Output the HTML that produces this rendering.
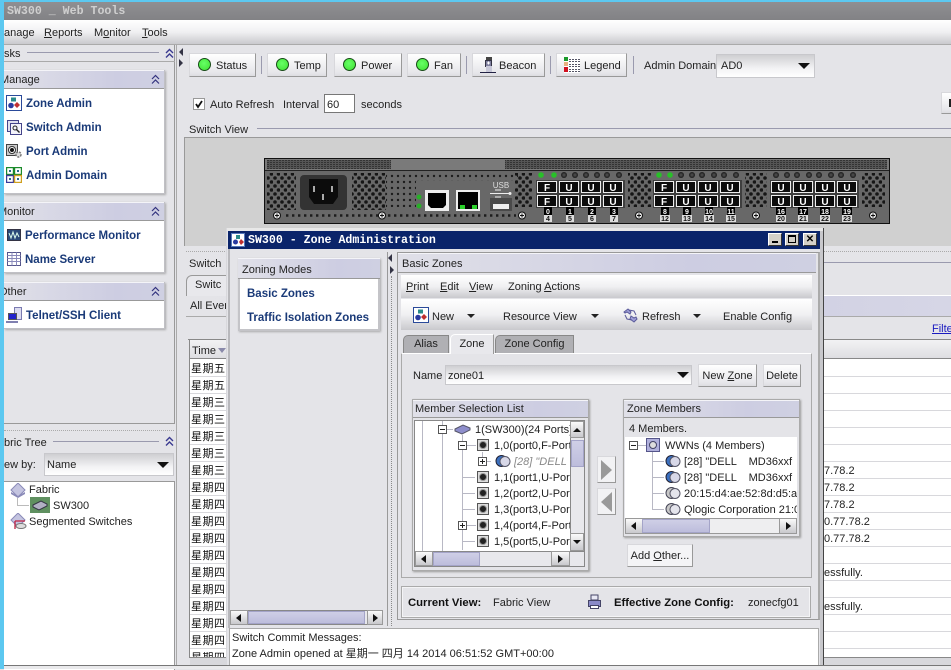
<!DOCTYPE html>
<html><head><meta charset="utf-8"><style>
html,body{margin:0;padding:0;background:#e4e4e8}
body{position:relative;width:951px;height:669px;overflow:hidden;font:11px/14px "Liberation Sans",sans-serif;color:#222}
.a,.t{position:absolute}
.t{white-space:nowrap;margin-top:1px}
.b{font-weight:bold;color:#1a3a78;font-size:11.5px}
.hd{position:absolute;background:linear-gradient(90deg,#e0e0e8,#cdcde2 70%,#cfd0e2);border-bottom:1px solid #999;box-shadow:inset 0 1px 0 #f4f4f8}
.pn{position:absolute;background:#fff;box-shadow:1px 1px 2px #aaa;border:1px solid #c0c0c5;box-sizing:border-box}
.btn{position:absolute;box-sizing:border-box;background:linear-gradient(#fff,#e6e6ea 85%,#dcdce0);border:1px solid #d8d8dc;border-right:1px solid #999;border-bottom:1px solid #999;text-align:center}
.sep{position:absolute;width:1px;height:18px;top:56px;background:#9a9aae}
.led{position:absolute;width:11px;height:11px;border-radius:50%;background:radial-gradient(circle at 45% 40%,#6f6,#3ee030);border:1.5px solid #174a17;top:58px}
.tb{background:linear-gradient(#fff,#f0f0f2 50%,#c9c9cd);position:absolute}
.cb{position:absolute;box-sizing:border-box;background:linear-gradient(#cfcfd2,#f2f2f4 60%,#fff);border:1px solid #c8c8cc}
.ar{position:absolute;width:0;height:0;border-left:6px solid transparent;border-right:6px solid transparent;border-top:6px solid #111}
.ars{position:absolute;width:0;height:0;border-left:4px solid transparent;border-right:4px solid transparent;border-top:4px solid #222}
.cj{font:11px/14px "WenQuanYi Zen Hei","Noto Sans CJK SC",sans-serif;letter-spacing:.5px;color:#111;margin-top:0}
.l{position:absolute;height:1px;background:#d8d8dc;left:190px;width:761px}
.s{position:absolute;background:linear-gradient(#cfcfe6,#bdbddc);border:1px solid #a4a4c8;box-sizing:border-box}
.sb{position:absolute;background:linear-gradient(#fafafa,#c8c8cc);border:1px solid #999;box-sizing:border-box}
.tab{position:absolute;box-sizing:border-box;background:#b0b0b4;border:1px solid #888;border-bottom:0;text-align:center;line-height:17px;border-radius:5px 0 0 0}
.port{position:absolute;width:12px;height:12px;box-sizing:border-box;background:#ddd;border:1px solid #555}
.port i{position:absolute;left:1px;top:1px;width:8px;height:8px;border-radius:50%;background:#222;border:1px solid #999;box-sizing:border-box}
.g{position:absolute;background:#b8b8c4}
.box{position:absolute;width:9px;height:9px;box-sizing:border-box;border:1px solid #555;background:#fff}
.box:before{content:"";position:absolute;left:1px;top:3px;width:5px;height:1px;background:#222}
.plus:after{content:"";position:absolute;left:3px;top:1px;width:1px;height:5px;background:#222}
.wb{position:absolute;top:233px;height:13px;width:14px;box-sizing:border-box;background:#d4d0c8;border:1px solid;border-color:#fff #333 #333 #fff;font:bold 10px/11px "Liberation Sans",sans-serif;text-align:center;color:#000}
</style></head><body>

<!-- screen edge -->
<div class="a" style="left:0;top:0;width:951px;height:2px;background:#5cc8f0"></div>
<div class="a" style="left:0;top:0;width:4px;height:669px;background:#5cc8f0;z-index:9"></div>

<!-- title bar -->
<div class="a" style="left:4px;top:2px;width:947px;height:18px;background:linear-gradient(#8f8f92,#828285)"></div>
<div class="t" style="left:7px;top:4px;font:bold 11.6px/14px 'Liberation Mono',monospace;color:#cfcfcf">SW300 _ Web Tools</div>

<!-- menu -->
<div class="tb" style="left:4px;top:20px;width:947px;height:24px;border-bottom:1px solid #aaa"></div>
<div class="t" style="left:4px;top:25px">anage</div>
<div class="t" style="left:44px;top:25px"><u>R</u>eports</div>
<div class="t" style="left:94px;top:25px">M<u>o</u>nitor</div>
<div class="t" style="left:142px;top:25px"><u>T</u>ools</div>

<!-- LEFT TASK COLUMN -->
<div class="a" style="left:174px;top:45px;width:1px;height:379px;background:#999"></div>
<div class="a" style="left:4px;top:423px;width:171px;height:1px;background:#999"></div>
<div class="a" style="left:4px;top:61px;width:171px;height:1px;background:#aaa"></div>
<div class="t" style="left:4px;top:46px">sks</div>
<div class="a" style="left:27px;top:52px;width:132px;height:1px;background:#9a9aae"></div>
<svg class="a" style="left:164px;top:48px" width="11" height="11" viewBox="0 0 11 11"><path d="M2 5l3.500-3.500L9 5M2 9.500l3.500-3.500L9 9.500" fill="none" stroke="#3a3a90" stroke-width="1.400"/></svg>

<!-- Manage -->
<div class="pn" style="left:4px;top:70px;width:161px;height:124px;border-left:0"></div>
<div class="hd" style="left:4px;top:70px;width:160px;height:18px"></div>
<div class="t" style="left:0;top:72px">Manage</div>
<svg class="a" style="left:150px;top:74px" width="11" height="11" viewBox="0 0 11 11"><path d="M2 5l3.500-3.500L9 5M2 9.500l3.500-3.500L9 9.500" fill="none" stroke="#33337f" stroke-width="1.200"/></svg>
<svg class="a" style="left:6px;top:95px" width="16" height="16"><rect x=".5" y=".5" width="15" height="15" fill="#fff" stroke="#2a4a9a"/><rect x="5" y="2.500" width="5" height="4" fill="#2a8a8a"/><circle cx="5" cy="10.500" r="2.800" fill="#2a3aa0"/><path d="M11 7l3 3-3 3-3-3z" fill="#c03030"/></svg>
<div class="t b" style="left:26px;top:96px">Zone Admin</div>
<svg class="a" style="left:7px;top:120px" width="15" height="15"><rect x=".5" y=".5" width="11" height="11" fill="#e0e0ee" stroke="#44448a"/><rect x="3.500" y="3.500" width="11" height="11" fill="#f4f4fa" stroke="#44448a"/><circle cx="8" cy="8" r="2" fill="none" stroke="#222"/><path d="M9.500 9.500l3 3" stroke="#222" stroke-width="1.400"/></svg>
<div class="t b" style="left:26px;top:120px">Switch Admin</div>
<svg class="a" style="left:6px;top:144px" width="17" height="15"><rect x=".5" y=".5" width="11" height="11" fill="#ccc" stroke="#444"/><circle cx="6" cy="6" r="3.500" fill="#fff" stroke="#333"/><circle cx="6" cy="6" r="2" fill="#111"/><circle cx="12.500" cy="10.500" r="2.500" fill="#ddd" stroke="#777" stroke-width="1.500" stroke-dasharray="2 1"/></svg>
<div class="t b" style="left:26px;top:144px">Port Admin</div>
<svg class="a" style="left:6px;top:167px" width="16" height="16"><rect x=".5" y=".5" width="7" height="7" fill="#fff" stroke="#1a8a2a" stroke-width="1.400"/><rect x="8.500" y=".5" width="7" height="7" fill="#fff" stroke="#1a8a2a" stroke-width="1.400"/><rect x=".5" y="8.500" width="7" height="7" fill="#fff" stroke="#3a3a9a" stroke-width="1.400"/><rect x="8.500" y="8.500" width="7" height="7" fill="#fff" stroke="#d0a020" stroke-width="1.400"/><rect x="3" y="3" width="2" height="2" fill="#2a6a8a"/><rect x="11" y="3" width="2" height="2" fill="#2a6a8a"/><rect x="3" y="11" width="2" height="2" fill="#2a6a8a"/><rect x="11" y="11" width="2" height="2" fill="#2a6a8a"/></svg>
<div class="t b" style="left:26px;top:168px">Admin Domain</div>

<!-- Monitor -->
<div class="pn" style="left:4px;top:202px;width:161px;height:71px;border-left:0"></div>
<div class="hd" style="left:4px;top:202px;width:160px;height:18px"></div>
<div class="t" style="left:-2px;top:204px">Monitor</div>
<svg class="a" style="left:150px;top:206px" width="11" height="11" viewBox="0 0 11 11"><path d="M2 5l3.500-3.500L9 5M2 9.500l3.500-3.500L9 9.500" fill="none" stroke="#33337f" stroke-width="1.200"/></svg>
<svg class="a" style="left:7px;top:229px" width="14" height="12"><rect x=".5" y=".5" width="13" height="11" fill="#2a4a78" stroke="#334"/><path d="M2 4l2 5 2-6 2 6 2-5 2 4" fill="none" stroke="#dfe" stroke-width="1"/></svg>
<div class="t b" style="left:25px;top:228px">Performance Monitor</div>
<svg class="a" style="left:7px;top:252px" width="14" height="14"><rect x=".5" y=".5" width="13" height="13" fill="#fff" stroke="#55558a"/><path d="M.5 3.500h13M.5 6.500h13M.5 9.500h13M5 .5v13M9.500 .5v13" stroke="#8a8aba" fill="none"/></svg>
<div class="t b" style="left:25px;top:252px">Name Server</div>

<!-- Other -->
<div class="pn" style="left:4px;top:282px;width:161px;height:47px;border-left:0"></div>
<div class="hd" style="left:4px;top:282px;width:160px;height:18px"></div>
<div class="t" style="left:-1px;top:284px">Other</div>
<svg class="a" style="left:150px;top:286px" width="11" height="11" viewBox="0 0 11 11"><path d="M2 5l3.500-3.500L9 5M2 9.500l3.500-3.500L9 9.500" fill="none" stroke="#33337f" stroke-width="1.200"/></svg>
<svg class="a" style="left:6px;top:307px" width="16" height="16"><rect x="8.500" y=".5" width="7" height="12" fill="#dcdcf0" stroke="#7a7ab0"/><rect x="2.500" y="6.500" width="8" height="6" fill="#2222cc" stroke="#555"/><path d="M0 15h12" stroke="#8080b0" stroke-width="2"/></svg>
<div class="t b" style="left:26px;top:308px">Telnet/SSH Client</div>

<!-- Fabric tree -->
<div class="a" style="left:4px;top:430px;width:170px;height:0;border-top:1px dotted #aaa"></div>
<div class="t" style="left:4px;top:435px">bric Tree</div>
<div class="a" style="left:53px;top:441px;width:106px;height:1px;background:#9a9aae"></div>
<svg class="a" style="left:164px;top:436px" width="11" height="11" viewBox="0 0 11 11"><path d="M2 5l3.500-3.500L9 5M2 9.500l3.500-3.500L9 9.500" fill="none" stroke="#3a3a90" stroke-width="1.400"/></svg>
<div class="t" style="left:4px;top:457px">ew by:</div>
<div class="cb" style="left:44px;top:453px;width:130px;height:23px"></div>
<div class="t" style="left:47px;top:457px">Name</div>
<div class="ar" style="left:157px;top:462px"></div>
<div class="a" style="left:4px;top:481px;width:170px;height:188px;background:#fff;border-top:1px solid #999;border-right:1px solid #999"></div>
<svg class="a" style="left:9px;top:483px" width="18" height="16"><path d="M9 0l7 7-7 7-7-7z" fill="#c4c4e0" stroke="#8a8ab8"/><path d="M2 9l7 4 7-4v2l-7 4-7-4z" fill="#8a8ab8"/></svg>
<div class="t" style="left:29px;top:482px">Fabric</div>
<div class="a" style="left:17px;top:498px;width:1px;height:8px;background:#bbb"></div><div class="a" style="left:17px;top:505px;width:12px;height:1px;background:#bbb"></div>
<svg class="a" style="left:30px;top:497px" width="20" height="16"><rect width="20" height="16" fill="#5f9060"/><path d="M3 8l8-4 6 3v2l-8 4-6-3z" fill="#b0b0c4" stroke="#334"/></svg>
<div class="t" style="left:53px;top:498px">SW300</div>
<svg class="a" style="left:9px;top:513px" width="18" height="17"><path d="M9 0l7 7-7 7-7-7z" fill="#c4c4e0" stroke="#8a8ab8"/><path d="M6 8h10M6 8v8" stroke="#c02040" fill="none" stroke-width="1.300"/><ellipse cx="12" cy="13" rx="5" ry="2.500" fill="#ddd" stroke="#777"/></svg>
<div class="t" style="left:29px;top:514px">Segmented Switches</div>

<!-- splitter arrows -->
<div class="a" style="left:179px;top:48px;width:0;height:0;border:4px solid transparent;border-right:4px solid #334;border-left:0"></div>
<div class="a" style="left:179px;top:59px;width:0;height:0;border:4px solid transparent;border-left:4px solid #334;border-right:0"></div>
<div class="a" style="left:176px;top:44px;width:1px;height:625px;background:#aaa"></div>

<!-- toolbar buttons -->
<div class="btn" style="left:189px;top:53px;width:67px;height:24px"></div><div class="led" style="left:198px"></div><div class="t" style="left:216px;top:58px">Status</div>
<div class="sep" style="left:261px"></div>
<div class="btn" style="left:267px;top:53px;width:60px;height:24px"></div><div class="led" style="left:276px"></div><div class="t" style="left:294px;top:58px">Temp</div>
<div class="btn" style="left:334px;top:53px;width:68px;height:24px"></div><div class="led" style="left:343px"></div><div class="t" style="left:361px;top:58px">Power</div>
<div class="btn" style="left:407px;top:53px;width:54px;height:24px"></div><div class="led" style="left:416px"></div><div class="t" style="left:434px;top:58px">Fan</div>
<div class="sep" style="left:466px"></div>
<div class="btn" style="left:472px;top:53px;width:73px;height:24px"></div>
<svg class="a" style="left:480px;top:56px" width="17" height="18"><rect x="6" y="1" width="6" height="4" fill="#444"/><rect x="5.500" y="4.500" width="6" height="6" fill="#8080a0" stroke="#334"/><rect x="6" y="10" width="6" height="6" fill="#c8c8d8"/><path d="M0 16.500h16" stroke="#224"/><path d="M7 7h3M8.500 5.500v3" stroke="#fff"/></svg>
<div class="t" style="left:499px;top:58px">Beacon</div>
<div class="sep" style="left:550px"></div>
<div class="btn" style="left:556px;top:53px;width:71px;height:24px"></div>
<svg class="a" style="left:564px;top:57px" width="16" height="16"><rect width="16" height="16" fill="#fff"/><rect x="0" y="0" width="4" height="4" fill="#1a9a2a"/><rect x="0" y="5" width="4" height="4" fill="#e8b080"/><rect x="0" y="10" width="4" height="5" fill="#d01020"/><path d="M5 2.500h11M5 7.500h11M5 12.500h11M5 4.500h11M5 9.500h11M5 14.500h11" stroke="#556" stroke-dasharray="2 1" fill="none"/></svg>
<div class="t" style="left:584px;top:58px">Legend</div>
<div class="sep" style="left:633px"></div>
<div class="t" style="left:644px;top:58px">Admin Domain</div>
<div class="cb" style="left:716px;top:54px;width:99px;height:24px"></div>
<div class="t" style="left:721px;top:58px">AD0</div>
<div class="ar" style="left:798px;top:63px"></div>

<!-- auto refresh -->
<div class="a" style="left:193px;top:98px;width:12px;height:12px;box-sizing:border-box;background:#fff;border:1px solid #999"></div>
<svg class="a" style="left:194px;top:99px" width="10" height="10"><path d="M2 5l2 3 4-6" fill="none" stroke="#111" stroke-width="1.800"/></svg>
<div class="t" style="left:210px;top:97px">Auto Refresh</div>
<div class="t" style="left:283px;top:97px">Interval</div>
<div class="a" style="left:324px;top:94px;width:31px;height:19px;box-sizing:border-box;background:#fff;border:1px solid #777"></div>
<div class="t" style="left:327px;top:97px">60</div>
<div class="t" style="left:361px;top:97px">seconds</div>
<div class="btn" style="left:941px;top:92px;width:14px;height:22px"></div>
<div class="a" style="left:949px;top:99px;width:2px;height:8px;background:#222"></div>

<!-- Switch view -->
<div class="t" style="left:189px;top:122px">Switch View</div>
<div class="a" style="left:257px;top:128px;width:694px;height:1px;background:#9a9aae"></div>
<div class="a" style="left:184px;top:137px;width:767px;height:109px;background:#d0d0d0;border-top:1px solid #999;border-left:1px solid #999;box-sizing:border-box"></div>

<svg class="a" style="left:264px;top:158px" width="626" height="66" viewBox="264 158 626 66">
<defs>
<pattern id="vent" width="3" height="2" patternUnits="userSpaceOnUse"><rect width="3" height="2" fill="#555"/><rect width="2" height="1" fill="#333"/></pattern>
<pattern id="big" width="7" height="8" patternUnits="userSpaceOnUse"><circle cx="2" cy="2" r="1.800" fill="#161616"/><circle cx="5.500" cy="6" r="1.800" fill="#161616"/></pattern>
<pattern id="sm" width="6" height="6" patternUnits="userSpaceOnUse"><circle cx="2" cy="2" r="1.200" fill="#1c1c1c"/></pattern>
<radialGradient id="dk"><stop offset="0" stop-color="#555"/><stop offset="1" stop-color="#1a1a1a"/></radialGradient>
</defs>
<rect x="264.500" y="158.500" width="625" height="65" fill="#686868" stroke="#111"/>
<rect x="265" y="159" width="624" height="11" fill="#7a7a7a"/><path d="M265 170.500h624" stroke="#222"/>
<rect x="267" y="160" width="124" height="9" fill="url(#vent)"/><rect x="505" y="160" width="382" height="9" fill="url(#vent)"/>
<rect x="267" y="173" width="29" height="37" fill="url(#big)"/>
<rect x="352" y="173" width="34" height="37" fill="url(#big)"/>
<rect x="386" y="173" width="132" height="8" fill="url(#sm)"/>
<rect x="386" y="181" width="30" height="26" fill="url(#sm)"/>
<rect x="515" y="173" width="17" height="34" fill="url(#big)"/>
<path d="M286 215.500H516" stroke="#1c1c1c" stroke-width="2.400" stroke-dasharray="2.400 3.600"/>
<rect x="628" y="173" width="23" height="34" fill="url(#big)"/>
<rect x="745" y="173" width="22" height="34" fill="url(#big)"/>
<rect x="862" y="173" width="23" height="34" fill="url(#big)"/>
<!-- power -->
<rect x="300" y="175" width="47" height="35" rx="4" fill="#333"/>
<path d="M309 179h29v18l-5 7h-19l-5-7z" fill="#0c0c0c"/>
<rect x="313" y="186" width="2" height="6" fill="#aaa"/><rect x="331" y="186" width="2" height="6" fill="#aaa"/><rect x="322" y="194" width="2" height="6" fill="#aaa"/>
<!-- leds eth -->
<circle cx="419" cy="197" r="2.500" fill="#28b028"/><circle cx="419" cy="206" r="2.500" fill="#28b028"/>
<rect x="425" y="190" width="24" height="21" fill="#eee"/>
<path d="M428 193h18v12l-3 3h-12l-3-3z" fill="#000"/>
<rect x="456" y="190" width="24" height="21" fill="#eee"/>
<rect x="458" y="192" width="20" height="17" fill="#000"/>
<rect x="460" y="205" width="5" height="4" fill="#2ad02a"/><rect x="472" y="205" width="5" height="4" fill="#2ad02a"/>
<!-- usb -->
<text x="501" y="188" font-family="Liberation Sans" font-size="8" fill="#ddd" text-anchor="middle">USB</text>
<path d="M490 193.500h20M495 190h6M495 197h6" stroke="#eee" fill="none"/><circle cx="510" cy="193.500" r="1.500" fill="#eee"/>
<rect x="490" y="198" width="22" height="13" fill="#4a4a4a"/><rect x="493" y="204" width="16" height="5" fill="#f0f0f0"/>
<!-- screws -->
<g fill="#e8e8e8" stroke="#111">
<circle cx="277" cy="215.500" r="3.500"/><circle cx="382" cy="215.500" r="3.500"/><circle cx="522" cy="215.500" r="3.500"/><circle cx="639" cy="215.500" r="3.500"/><circle cx="756" cy="215.500" r="3.500"/><circle cx="873" cy="215.500" r="3.500"/></g>
<path d="M275 215.500h4M277 213.500v4M380 215.500h4M382 213.500v4M520 215.500h4M522 213.500v4M637 215.500h4M639 213.500v4M754 215.500h4M756 213.500v4M871 215.500h4M873 213.500v4" stroke="#111"/>
<!-- status leds -->
<g fill="url(#dk)">
<circle cx="564" cy="175" r="3"/><circle cx="575" cy="175" r="3"/><circle cx="586" cy="175" r="3"/><circle cx="597" cy="175" r="3"/><circle cx="607" cy="175" r="3"/><circle cx="619" cy="175" r="3"/>
<circle cx="681" cy="175" r="3"/><circle cx="692" cy="175" r="3"/><circle cx="702" cy="175" r="3"/><circle cx="714" cy="175" r="3"/><circle cx="724" cy="175" r="3"/><circle cx="736" cy="175" r="3"/>
<circle cx="776" cy="175" r="3"/><circle cx="787" cy="175" r="3"/><circle cx="797" cy="175" r="3"/><circle cx="809" cy="175" r="3"/><circle cx="819" cy="175" r="3"/><circle cx="831" cy="175" r="3"/><circle cx="841" cy="175" r="3"/><circle cx="853" cy="175" r="3"/></g>
<g fill="#28c028"><circle cx="541" cy="175" r="2.800"/><circle cx="554" cy="175" r="2.800"/><circle cx="659" cy="175" r="2.800"/><circle cx="670" cy="175" r="2.800"/></g>
<!-- port backing -->
<rect x="536" y="180" width="89" height="28" fill="#3f3f3f"/><rect x="653" y="180" width="89" height="28" fill="#3f3f3f"/><rect x="770" y="180" width="89" height="28" fill="#3f3f3f"/>
<g fill="#0c0c0c" stroke="#eee">
<rect x="537.500" y="181.500" width="19" height="11"/><rect x="559.500" y="181.500" width="19" height="11"/><rect x="581.500" y="181.500" width="19" height="11"/><rect x="603.500" y="181.500" width="19" height="11"/>
<rect x="537.500" y="195.500" width="19" height="11"/><rect x="559.500" y="195.500" width="19" height="11"/><rect x="581.500" y="195.500" width="19" height="11"/><rect x="603.500" y="195.500" width="19" height="11"/>
<rect x="654.500" y="181.500" width="19" height="11"/><rect x="676.500" y="181.500" width="19" height="11"/><rect x="698.500" y="181.500" width="19" height="11"/><rect x="720.500" y="181.500" width="19" height="11"/>
<rect x="654.500" y="195.500" width="19" height="11"/><rect x="676.500" y="195.500" width="19" height="11"/><rect x="698.500" y="195.500" width="19" height="11"/><rect x="720.500" y="195.500" width="19" height="11"/>
<rect x="771.500" y="181.500" width="19" height="11"/><rect x="793.500" y="181.500" width="19" height="11"/><rect x="815.500" y="181.500" width="19" height="11"/><rect x="837.500" y="181.500" width="19" height="11"/>
<rect x="771.500" y="195.500" width="19" height="11"/><rect x="793.500" y="195.500" width="19" height="11"/><rect x="815.500" y="195.500" width="19" height="11"/><rect x="837.500" y="195.500" width="19" height="11"/>
</g>
<g font-family="Liberation Sans" font-size="10" font-weight="bold" fill="#fff" text-anchor="middle">
<text x="547" y="191">F</text><text x="569" y="191">U</text><text x="591" y="191">U</text><text x="613" y="191">U</text>
<text x="547" y="205">F</text><text x="569" y="205">U</text><text x="591" y="205">U</text><text x="613" y="205">U</text>
<text x="664" y="191">F</text><text x="686" y="191">U</text><text x="708" y="191">U</text><text x="730" y="191">U</text>
<text x="664" y="205">F</text><text x="686" y="205">U</text><text x="708" y="205">U</text><text x="730" y="205">U</text>
<text x="781" y="191">U</text><text x="803" y="191">U</text><text x="825" y="191">U</text><text x="847" y="191">U</text>
<text x="781" y="205">U</text><text x="803" y="205">U</text><text x="825" y="205">U</text><text x="847" y="205">U</text>
</g>
<!-- number plates -->
<g fill="#000">
<rect x="544" y="207" width="8" height="8"/><rect x="566" y="207" width="8" height="8"/><rect x="588" y="207" width="8" height="8"/><rect x="610" y="207" width="8" height="8"/>
<rect x="661" y="207" width="8" height="8"/><rect x="683" y="207" width="8" height="8"/><rect x="705" y="207" width="8" height="8"/><rect x="727" y="207" width="8" height="8"/>
<rect x="776" y="207" width="10" height="8"/><rect x="798" y="207" width="10" height="8"/><rect x="820" y="207" width="10" height="8"/><rect x="842" y="207" width="10" height="8"/></g>
<g fill="#ddd">
<rect x="544" y="215" width="8" height="7"/><rect x="566" y="215" width="8" height="7"/><rect x="588" y="215" width="8" height="7"/><rect x="610" y="215" width="8" height="7"/>
<rect x="660" y="215" width="10" height="7"/><rect x="682" y="215" width="10" height="7"/><rect x="704" y="215" width="10" height="7"/><rect x="726" y="215" width="10" height="7"/>
<rect x="776" y="215" width="10" height="7"/><rect x="798" y="215" width="10" height="7"/><rect x="820" y="215" width="10" height="7"/><rect x="842" y="215" width="10" height="7"/></g>
<g font-family="Liberation Sans" font-size="7" font-weight="bold" fill="#fff" text-anchor="middle">
<text x="548" y="214">0</text><text x="570" y="214">1</text><text x="592" y="214">2</text><text x="614" y="214">3</text>
<text x="665" y="214">8</text><text x="687" y="214">9</text><text x="709" y="214">10</text><text x="731" y="214">11</text>
<text x="781" y="214">16</text><text x="803" y="214">17</text><text x="825" y="214">18</text><text x="847" y="214">19</text></g>
<g font-family="Liberation Sans" font-size="7" font-weight="bold" fill="#111" text-anchor="middle">
<text x="548" y="221">4</text><text x="570" y="221">5</text><text x="592" y="221">6</text><text x="614" y="221">7</text>
<text x="665" y="221">12</text><text x="687" y="221">13</text><text x="709" y="221">14</text><text x="731" y="221">15</text>
<text x="781" y="221">20</text><text x="803" y="221">21</text><text x="825" y="221">22</text><text x="847" y="221">23</text></g>
</svg>

<!-- lower main area -->
<div class="a" style="left:186px;top:251px;width:765px;height:0;border-top:1px dotted #aaa"></div>
<div class="t" style="left:189px;top:256px">Switch</div>
<div class="a" style="left:186px;top:262px;width:0;height:0"></div>
<div class="a" style="left:824px;top:262px;width:127px;height:1px;background:#9a9aae"></div>
<div class="a" style="left:186px;top:295px;width:765px;height:1px;background:#fff"></div>
<div class="a" style="left:186px;top:275px;width:41px;height:21px;box-sizing:border-box;background:#e8e8ec;border:1px solid #999;border-bottom:0;border-radius:6px 0 0 0"></div>
<div class="t" style="left:195px;top:277px">Switc</div>
<div class="a" style="left:186px;top:296px;width:765px;height:20px;background:linear-gradient(90deg,#e4e4e8,#e0e0e8 30%,#cfcfe2 70%,#d6d6e6)"></div>
<div class="t" style="left:190px;top:298px">All Even</div>
<div class="a" style="left:186px;top:316px;width:765px;height:1px;background:#aaa"></div>
<div class="t" style="left:932px;top:321px;color:#1a1ac0;text-decoration:underline">Filte</div>
<div class="a" style="left:188px;top:339px;width:763px;height:1px;background:#888"></div>
<div class="a" style="left:189px;top:340px;width:762px;height:19px;background:linear-gradient(#f2f2f4,#dedee2);border-bottom:1px solid #888;box-sizing:border-box"></div>
<div class="a" style="left:189px;top:340px;width:1px;height:318px;background:#888"></div>
<div class="t" style="left:192px;top:343px">Time</div>
<div class="a" style="left:218px;top:348px;width:0;height:0;border-left:4px solid transparent;border-right:4px solid transparent;border-top:5px solid #8a8aaa"></div>
<div class="a" style="left:190px;top:359px;width:761px;height:298px;background:#fff"></div>

<div class="a" style="left:191px;top:359px;width:36px;height:299px;overflow:hidden">
<div class="t cj" style="left:0;top:2px">星期五</div>
<div class="t cj" style="left:0;top:19px">星期五</div>
<div class="t cj" style="left:0;top:36px">星期三</div>
<div class="t cj" style="left:0;top:53px">星期三</div>
<div class="t cj" style="left:0;top:70px">星期三</div>
<div class="t cj" style="left:0;top:87px">星期三</div>
<div class="t cj" style="left:0;top:104px">星期三</div>
<div class="t cj" style="left:0;top:121px">星期四</div>
<div class="t cj" style="left:0;top:138px">星期四</div>
<div class="t cj" style="left:0;top:155px">星期四</div>
<div class="t cj" style="left:0;top:172px">星期四</div>
<div class="t cj" style="left:0;top:189px">星期四</div>
<div class="t cj" style="left:0;top:206px">星期四</div>
<div class="t cj" style="left:0;top:223px">星期四</div>
<div class="t cj" style="left:0;top:240px">星期四</div>
<div class="t cj" style="left:0;top:257px">星期四</div>
<div class="t cj" style="left:0;top:274px">星期四</div>
<div class="t cj" style="left:0;top:291px">星期四</div>
</div>

<div class="l" style="top:376px"></div><div class="l" style="top:393px"></div><div class="l" style="top:410px"></div><div class="l" style="top:427px"></div><div class="l" style="top:444px"></div><div class="l" style="top:461px"></div><div class="l" style="top:478px"></div><div class="l" style="top:495px"></div><div class="l" style="top:512px"></div><div class="l" style="top:529px"></div><div class="l" style="top:546px"></div><div class="l" style="top:563px"></div><div class="l" style="top:580px"></div><div class="l" style="top:597px"></div><div class="l" style="top:614px"></div><div class="l" style="top:631px"></div><div class="l" style="top:648px"></div>
<div class="t" style="left:824px;top:463px">7.78.2</div>
<div class="t" style="left:824px;top:480px">7.78.2</div>
<div class="t" style="left:824px;top:497px">7.78.2</div>
<div class="t" style="left:824px;top:514px">0.77.78.2</div>
<div class="t" style="left:824px;top:531px">0.77.78.2</div>
<div class="t" style="left:824px;top:565px">essfully.</div>
<div class="t" style="left:824px;top:599px">essfully.</div>
<div class="a" style="left:190px;top:657px;width:761px;height:8px;background:#d8d8dc;border-top:1px solid #888;box-sizing:border-box"></div>
<div class="a" style="left:4px;top:665px;width:947px;height:4px;background:#eaeaec;border-top:1px solid #777;box-sizing:border-box;z-index:6"></div>

<!-- ZONE WINDOW -->
<div class="a" style="left:226px;top:228px;width:598px;height:437px;background:#e4e4e8;border-right:1px solid #444;border-left:1px solid #d8d8dc;box-sizing:border-box;box-shadow:inset 0 3px 0 #e8e8e8"></div>
<div class="a" style="left:820px;top:231px;width:3px;height:434px;background:#c8c8cc"></div>
<div class="a" style="left:228px;top:231px;width:592px;height:18px;background:#0a246a"></div>
<div class="a" style="left:228px;top:249px;width:2px;height:379px;background:#b8b8bc"></div>
<svg class="a" style="left:231px;top:233px" width="14" height="14"><rect x=".5" y=".5" width="13" height="13" fill="#fff" stroke="#5577bb"/><rect x="5" y="2" width="4" height="4" fill="#2a8a8a"/><circle cx="4.500" cy="9" r="2.500" fill="#2a3aa0"/><path d="M10 6l3 3-3 3-2-3z" fill="#c03030"/></svg>
<div class="t" style="left:248px;top:233px;font:bold 11.6px/14px 'Liberation Mono',monospace;color:#fff">SW300 - Zone Administration</div>
<div class="wb" style="left:768px"><span style="position:absolute;left:3px;bottom:2px;width:6px;height:2px;background:#000"></span></div>
<div class="wb" style="left:785px"><span style="position:absolute;left:2px;top:1px;width:8px;height:8px;box-sizing:border-box;border:1px solid #000;border-top-width:2px"></span></div>
<div class="wb" style="left:803px">✕</div>

<!-- Zoning modes -->
<div class="pn" style="left:238px;top:258px;width:142px;height:73px;border:2px solid #c4c4c8;border-top:1px solid #aaa"></div>
<div class="hd" style="left:238px;top:258px;width:142px;height:20px"></div>
<div class="t" style="left:242px;top:262px">Zoning Modes</div>
<div class="t b" style="left:247px;top:286px">Basic Zones</div>
<div class="t b" style="left:247px;top:310px">Traffic Isolation Zones</div>
<div class="a" style="left:388px;top:254px;width:0;height:0;border:4px solid transparent;border-right:4px solid #334;border-left:0"></div>
<div class="a" style="left:390px;top:266px;width:0;height:0;border:4px solid transparent;border-left:4px solid #334;border-right:0"></div>
<div class="a" style="left:391px;top:276px;width:0;height:350px;border-left:1px dotted #888"></div>
<div class="a" style="left:387px;top:252px;width:1px;height:374px;background:#999"></div>
<div class="a" style="left:230px;top:610px;width:153px;height:15px;background:#e8e8ec;border:1px solid #888;box-sizing:border-box"></div>
<div class="sb" style="left:230px;top:610px;width:18px;height:15px"></div>
<div class="a" style="left:236px;top:614px;width:0;height:0;border:4px solid transparent;border-right:5px solid #111;border-left:0"></div>
<div class="s" style="left:248px;top:611px;width:117px;height:13px"></div>
<div class="sb" style="left:367px;top:610px;width:16px;height:15px"></div>
<div class="a" style="left:373px;top:614px;width:0;height:0;border:4px solid transparent;border-left:5px solid #111;border-right:0"></div>

<!-- right pane -->
<div class="a" style="left:397px;top:252px;width:423px;height:368px;box-sizing:border-box;border:1px solid #999;border-right:2px solid #aaa"></div>
<div class="hd" style="left:398px;top:253px;width:418px;height:19px"></div>
<div class="t" style="left:402px;top:256px">Basic Zones</div>
<div class="tb" style="left:401px;top:275px;width:411px;height:23px"></div>
<div class="t" style="left:406px;top:279px"><u>P</u>rint</div>
<div class="t" style="left:440px;top:279px"><u>E</u>dit</div>
<div class="t" style="left:469px;top:279px"><u>V</u>iew</div>
<div class="t" style="left:508px;top:279px">Zoning <u>A</u>ctions</div>
<div class="tb" style="left:401px;top:299px;width:411px;height:31px"></div>
<svg class="a" style="left:413px;top:307px" width="16" height="16"><rect x=".5" y=".5" width="15" height="15" fill="#fff" stroke="#2a4a9a"/><rect x="5" y="2.500" width="5" height="4" fill="#2a8a8a"/><circle cx="5" cy="10.500" r="2.800" fill="#2a3aa0"/><path d="M11 7l3 3-3 3-3-3z" fill="#c03030"/></svg>
<div class="t" style="left:432px;top:309px">New</div>
<div class="ars" style="left:467px;top:314px"></div>
<div class="t" style="left:503px;top:309px">Resource View</div>
<div class="ars" style="left:591px;top:314px"></div>
<svg class="a" style="left:623px;top:307px" width="16" height="16"><path d="M1 5l4-3 3 3-1 2-3-2-2 1zM8 9l3 2 2-1 1 2-3 3-4-3z" fill="#a0a0d8" stroke="#5a5a9a"/><path d="M6 3l5 1 2 4M9 13l-5-1-2-4" fill="none" stroke="#5a5a9a"/></svg>
<div class="t" style="left:642px;top:309px">Refresh</div>
<div class="ars" style="left:693px;top:314px"></div>
<div class="t" style="left:723px;top:309px">Enable Config</div>

<div class="tab" style="left:403px;top:335px;width:46px;height:18px">Alias</div>
<div class="tab" style="left:495px;top:335px;width:79px;height:18px">Zone Config</div>
<div class="a" style="left:401px;top:353px;width:411px;height:225px;box-sizing:border-box;border:1px solid #aaa;border-top:1px solid #fff;background:#e4e4e8"></div>
<div class="tab" style="left:450px;top:334px;width:44px;height:20px;background:#e8e8ec;border-color:#fff;color:#222;border-radius:5px 0 0 0;border-right:1px solid #999;line-height:19px">Zone</div>

<div class="t" style="left:413px;top:368px">Name</div>
<div class="cb" style="left:445px;top:365px;width:247px;height:20px"></div>
<div class="t" style="left:448px;top:368px">zone01</div>
<div class="ar" style="left:677px;top:372px"></div>
<div class="btn" style="left:698px;top:364px;width:59px;height:23px;line-height:23px">New <u>Z</u>one</div>
<div class="btn" style="left:763px;top:364px;width:38px;height:23px;line-height:23px">Delete</div>

<!-- member list -->
<div class="a" style="left:412px;top:399px;width:177px;height:172px;box-sizing:border-box;background:#e4e4e8;border:1px solid #aaa;box-shadow:1px 1px 2px #999"></div>
<div class="hd" style="left:413px;top:400px;width:175px;height:17px"></div>
<div class="t" style="left:415px;top:401px">Member Selection List</div>
<div class="a" style="left:414px;top:420px;width:171px;height:147px;background:#fff;border:1px solid #888;box-sizing:border-box"></div>
<div class="g" style="left:422px;top:421px;width:1px;height:130px"></div>
<div class="g" style="left:462px;top:435px;width:1px;height:115px"></div>
<div class="g" style="left:442px;top:421px;width:1px;height:130px"></div>
<div class="box" style="left:438px;top:425px"></div><div class="g" style="left:447px;top:429px;width:6px;height:1px"></div>
<svg class="a" style="left:454px;top:423px" width="17" height="13"><path d="M1 6l8-4 7 3v2l-8 4-7-3z" fill="#8e8ecc" stroke="#556"/></svg>
<div class="t" style="left:475px;top:422px;width:95px;overflow:hidden">1(SW300)(24 Ports)</div>
<div class="box" style="left:458px;top:441px"></div><div class="g" style="left:467px;top:445px;width:9px;height:1px"></div>
<div class="port" style="left:477px;top:439px"><i></i></div><div class="t" style="left:494px;top:438px;width:76px;overflow:hidden">1,0(port0,F-Port</div>
<div class="g" style="left:482px;top:452px;width:1px;height:10px"></div>
<div class="box plus" style="left:478px;top:457px"></div><div class="g" style="left:487px;top:461px;width:4px;height:1px"></div>
<svg class="a" style="left:495px;top:454px" width="16" height="14"><circle cx="6.500" cy="7" r="5.500" fill="#3a70c0" stroke="#223"/><circle cx="10" cy="7.500" r="5" fill="#d8d8e8" stroke="#556"/></svg>
<div class="t" style="left:514px;top:454px;width:56px;overflow:hidden;color:#888;font-style:italic">[28] "DELL</div>
<div class="g" style="left:463px;top:477px;width:12px;height:1px"></div><div class="port" style="left:477px;top:471px"><i></i></div><div class="t" style="left:494px;top:470px;width:76px;overflow:hidden">1,1(port1,U-Por</div>
<div class="g" style="left:463px;top:493px;width:12px;height:1px"></div><div class="port" style="left:477px;top:487px"><i></i></div><div class="t" style="left:494px;top:486px;width:76px;overflow:hidden">1,2(port2,U-Por</div>
<div class="g" style="left:463px;top:509px;width:12px;height:1px"></div><div class="port" style="left:477px;top:503px"><i></i></div><div class="t" style="left:494px;top:502px;width:76px;overflow:hidden">1,3(port3,U-Por</div>
<div class="box plus" style="left:458px;top:521px"></div><div class="g" style="left:467px;top:525px;width:9px;height:1px"></div><div class="port" style="left:477px;top:519px"><i></i></div><div class="t" style="left:494px;top:518px;width:76px;overflow:hidden">1,4(port4,F-Port</div>
<div class="g" style="left:463px;top:541px;width:12px;height:1px"></div><div class="port" style="left:477px;top:535px"><i></i></div><div class="t" style="left:494px;top:534px;width:76px;overflow:hidden">1,5(port5,U-Por</div>
<!-- v scroll -->
<div class="a" style="left:570px;top:421px;width:14px;height:130px;background:#e8e8ec;border-left:1px solid #888;box-sizing:border-box"></div>
<div class="sb" style="left:570px;top:421px;width:14px;height:17px"></div>
<div class="a" style="left:573px;top:428px;width:0;height:0;border:4px solid transparent;border-bottom:4px solid #111;border-top:0"></div>
<div class="s" style="left:571px;top:440px;width:13px;height:27px"></div>
<div class="sb" style="left:570px;top:533px;width:14px;height:18px"></div>
<div class="a" style="left:573px;top:540px;width:0;height:0;border:4px solid transparent;border-top:4px solid #111;border-bottom:0"></div>
<div class="a" style="left:415px;top:551px;width:169px;height:15px;background:#e8e8ec;border-top:1px solid #888;box-sizing:border-box"></div>
<div class="sb" style="left:415px;top:551px;width:18px;height:15px"></div>
<div class="a" style="left:421px;top:555px;width:0;height:0;border:4px solid transparent;border-right:5px solid #111;border-left:0"></div>
<div class="s" style="left:433px;top:552px;width:47px;height:14px"></div>
<div class="sb" style="left:551px;top:551px;width:19px;height:15px"></div>
<div class="a" style="left:558px;top:555px;width:0;height:0;border:4px solid transparent;border-left:5px solid #111;border-right:0"></div>

<!-- arrows -->
<div class="btn" style="left:597px;top:456px;width:19px;height:27px;background:#f2f2f4"></div>
<div class="a" style="left:601px;top:460px;width:0;height:0;border-top:10px solid transparent;border-bottom:10px solid transparent;border-left:11px solid #999"></div>
<div class="btn" style="left:597px;top:488px;width:19px;height:27px;background:#f2f2f4"></div>
<div class="a" style="left:601px;top:492px;width:0;height:0;border-top:10px solid transparent;border-bottom:10px solid transparent;border-right:11px solid #999"></div>

<!-- zone members -->
<div class="a" style="left:623px;top:399px;width:177px;height:138px;box-sizing:border-box;background:#e4e4e8;border:1px solid #aaa;box-shadow:1px 1px 2px #999"></div>
<div class="hd" style="left:624px;top:400px;width:175px;height:17px"></div>
<div class="t" style="left:627px;top:401px">Zone Members</div>
<div class="t" style="left:629px;top:421px">4 Members.</div>
<div class="a" style="left:625px;top:437px;width:172px;height:97px;background:#fff"></div>
<div class="box" style="left:629px;top:441px"></div><div class="g" style="left:638px;top:445px;width:8px;height:1px"></div>
<svg class="a" style="left:646px;top:438px" width="14" height="14"><rect x=".5" y=".5" width="13" height="13" fill="#b0b0dc" stroke="#55558a"/><circle cx="7" cy="7" r="3.500" fill="#ddd" stroke="#446"/></svg>
<div class="t" style="left:665px;top:438px">WWNs (4 Members)</div>
<div class="g" style="left:652px;top:452px;width:1px;height:58px"></div>
<div class="g" style="left:652px;top:461px;width:12px;height:1px"></div>
<svg class="a" style="left:665px;top:454px" width="16" height="14"><circle cx="6.500" cy="7" r="5.500" fill="#3a70c0" stroke="#223"/><circle cx="10" cy="7.500" r="5" fill="#d8d8e8" stroke="#556"/></svg>
<div class="t" style="left:684px;top:454px;white-space:pre">[28] "DELL    MD36xxf</div>
<div class="g" style="left:652px;top:477px;width:12px;height:1px"></div>
<svg class="a" style="left:665px;top:470px" width="16" height="14"><circle cx="6.500" cy="7" r="5.500" fill="#3a70c0" stroke="#223"/><circle cx="10" cy="7.500" r="5" fill="#d8d8e8" stroke="#556"/></svg>
<div class="t" style="left:684px;top:470px;white-space:pre">[28] "DELL    MD36xxf</div>
<div class="g" style="left:652px;top:493px;width:12px;height:1px"></div>
<svg class="a" style="left:665px;top:486px" width="16" height="14"><circle cx="6.500" cy="7" r="5.500" fill="#c8c8c8" stroke="#445"/><circle cx="10" cy="7.500" r="5" fill="#e4e4ec" stroke="#556"/></svg>
<div class="t" style="left:684px;top:486px;width:113px;overflow:hidden">20:15:d4:ae:52:8d:d5:al</div>
<div class="g" style="left:652px;top:509px;width:12px;height:1px"></div>
<svg class="a" style="left:665px;top:502px" width="16" height="14"><circle cx="6.500" cy="7" r="5.500" fill="#c8c8c8" stroke="#445"/><circle cx="10" cy="7.500" r="5" fill="#e4e4ec" stroke="#556"/></svg>
<div class="t" style="left:684px;top:502px;width:113px;overflow:hidden">Qlogic Corporation 21:0</div>
<div class="a" style="left:625px;top:518px;width:172px;height:16px;background:#eeeef0;border:1px solid #999;box-sizing:border-box"></div>
<div class="sb" style="left:625px;top:518px;width:18px;height:16px"></div>
<div class="a" style="left:631px;top:522px;width:0;height:0;border:4px solid transparent;border-right:5px solid #111;border-left:0"></div>
<div class="s" style="left:642px;top:519px;width:68px;height:14px"></div>
<div class="sb" style="left:779px;top:518px;width:18px;height:16px"></div>
<div class="a" style="left:786px;top:522px;width:0;height:0;border:4px solid transparent;border-left:5px solid #111;border-right:0"></div>
<div class="btn" style="left:627px;top:544px;width:66px;height:23px;line-height:23px;background:#f4f4f6">Add <u>O</u>ther...</div>

<!-- status -->
<div class="a" style="left:401px;top:586px;width:410px;height:32px;box-sizing:border-box;border:1px solid #aaa;box-shadow:inset 0 0 0 1px #f4f4f6"></div>
<div class="t" style="left:408px;top:595px;font-weight:bold;color:#111;font-size:11.3px">Current View:</div>
<div class="t" style="left:493px;top:595px">Fabric View</div>
<svg class="a" style="left:587px;top:594px" width="15" height="16"><rect x="4" y="1" width="7" height="5" fill="#e8e8f4" stroke="#446"/><path d="M1.500 6.500h12v6h-12z" fill="#8a8ac8" stroke="#446"/><rect x="3.500" y="11.500" width="8" height="3" fill="#fff" stroke="#446"/></svg>
<div class="t" style="left:614px;top:595px;font-weight:bold;color:#111;font-size:11.3px">Effective Zone Config:</div>
<div class="t" style="left:748px;top:595px">zonecfg01</div>

<!-- commit messages -->
<div class="a" style="left:229px;top:628px;width:590px;height:37px;background:#fff;border:1px solid #aaa;border-bottom:0;box-sizing:border-box"></div>
<div class="t" style="left:232px;top:630px">Switch Commit Messages:</div>
<div class="t" style="left:232px;top:646px;font-family:'Liberation Sans','WenQuanYi Zen Hei',sans-serif">Zone Admin opened at 星期一 四月 14 2014 06:51:52 GMT+00:00</div>

</body></html>
